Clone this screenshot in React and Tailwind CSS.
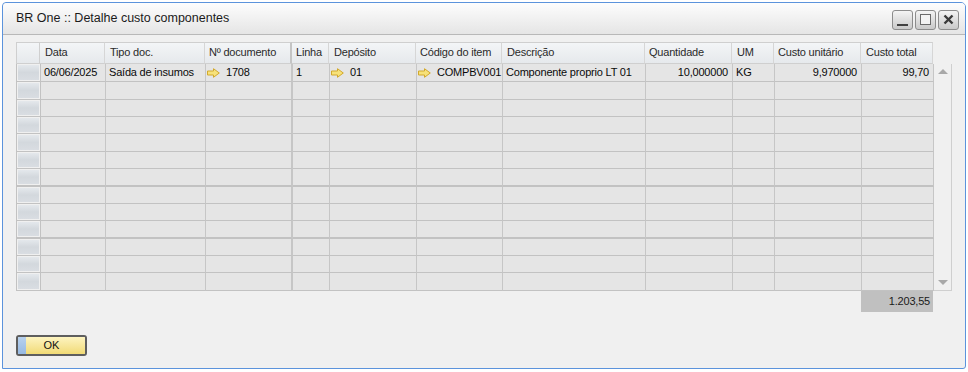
import React from 'react';

const cols = [
  { key: 'data', label: 'Data', w: 'w-[65px]', hp: 'pl-[5px]' },
  { key: 'tipo', label: 'Tipo doc.', w: 'w-[100px]', hp: 'pl-[5px]' },
  { key: 'doc', label: 'Nº documento', w: 'w-[87px]', hp: 'pl-[4px]', thick: true },
  { key: 'linha', label: 'Linha', w: 'w-[37px]', hp: 'pl-[4px]' },
  { key: 'dep', label: 'Depósito', w: 'w-[87px]', hp: 'pl-[5px]' },
  { key: 'cod', label: 'Código do item', w: 'w-[86px]', hp: 'pl-[4px]' },
  { key: 'desc', label: 'Descrição', w: 'w-[143px]', hp: 'pl-[5px]' },
  { key: 'qtd', label: 'Quantidade', w: 'w-[87px]', hp: 'pl-[4px]' },
  { key: 'um', label: 'UM', w: 'w-[42px]', hp: 'pl-[5px]' },
  { key: 'cu', label: 'Custo unitário', w: 'w-[87px]', hp: 'pl-[4px]' },
  { key: 'ct', label: 'Custo total', w: 'w-[72px]', hp: 'pl-[5px]' },
];

const row1 = {
  data: '06/06/2025',
  tipo: 'Saída de insumos',
  doc: '1708',
  linha: '1',
  dep: '01',
  cod: 'COMPBV001',
  desc: 'Componente proprio LT 01',
  qtd: '10,000000',
  um: 'KG',
  cu: '9,970000',
  ct: '99,70',
};

const linked = ['doc', 'dep', 'cod'];
const rightAligned = ['qtd', 'cu', 'ct'];

// bottom edges of the grid rows don't fall on an even step, so spell them out
const rowHeights = [
  'h-[18px]', 'h-[18px]', 'h-[17px]', 'h-[17px]', 'h-[18px]', 'h-[17px]', 'h-[18px]',
  'h-[17px]', 'h-[17px]', 'h-[18px]', 'h-[17px]', 'h-[17px]', 'h-[18px]',
];
const thickRows = [6, 9];

const LinkArrow = () => (
  <svg width="13" height="10" viewBox="0 0 13 10" className="shrink-0">
    <path
      d="M0.5 3 H6.5 V0.7 L12.3 5 L6.5 9.3 V7 H0.5 Z"
      fill="#f7e27a"
      stroke="#d2a92c"
      strokeWidth="1"
      strokeLinejoin="round"
    />
  </svg>
);

const TitleButton = ({ children }) => (
  <div className="w-[21px] h-[20px] rounded-[3px] border border-[#8c8c8c] bg-gradient-to-b from-[#f4f4f4] to-[#c9c9c9] flex items-center justify-center">
    {children}
  </div>
);

const RowHeader = ({ h, thick }) => (
  <div className={`w-[24px] ${h} shrink-0 border-r border-[#c2c2c2] ${thick ? 'border-b-2' : 'border-b'} border-b-[#c2c2c2] p-[1px]`}>
    <div className="w-full h-full bg-gradient-to-b from-[#e4e8ec] via-[#d3d8dd] to-[#d9dde2]" />
  </div>
);

const App = () => {
  return (
    <div className="w-[968px] h-[372px] bg-white overflow-hidden pt-[2px] pl-[2px] font-['Liberation_Sans',Arial,sans-serif]">
      <div className="w-[964px] h-[367px] border border-[#5b93dc] rounded-tl-[4px] rounded-tr-[5px] rounded-br-[3px] bg-[#f0f0f0] flex flex-col">
        {/* title bar */}
        <div className="h-[32px] shrink-0 border-b border-[#b8b8b8] bg-gradient-to-b from-[#fdfdfd] to-[#e5e5e5] flex items-center justify-between pl-[13px] pr-[6px] rounded-t-[4px]">
          <span className="text-[12.5px] text-[#1b1b1b]">BR One :: Detalhe custo componentes</span>
          <div className="flex gap-[2px] mt-[2px]">
            <TitleButton>
              <div className="w-[11px] h-[2px] bg-[#404040] mt-[11px]" />
            </TitleButton>
            <TitleButton>
              <div className="w-[11px] h-[11px] border border-[#6a6a6a] bg-[#f2f2f2]" />
            </TitleButton>
            <TitleButton>
              <svg width="11" height="11" viewBox="0 0 11 11">
                <path d="M1.5 1.5 L9.5 9.5 M9.5 1.5 L1.5 9.5" stroke="#3a3a3a" strokeWidth="2.4" />
              </svg>
            </TitleButton>
          </div>
        </div>

        {/* body */}
        <div className="pl-[13px] pt-[7px] flex flex-col">
          {/* header row */}
          <div className="flex h-[22px] text-[11px] text-[#2a2a2a] tracking-[-0.2px]">
            <div className="w-[24px] shrink-0 border-l border-t border-r border-b border-[#cfcfcf] bg-gradient-to-b from-[#f3f5f7] to-[#e6e9ec]" />
            {cols.map((c) => (
              <div
                key={c.key}
                className={`${c.w} shrink-0 ${c.hp} border-t border-b border-[#cfcfcf] ${c.thick ? 'border-r-2 border-r-[#c4c4c4]' : 'border-r border-r-[#d6d6d6]'} bg-gradient-to-b from-[#f3f5f7] to-[#e6e9ec] flex items-center pb-[2px] whitespace-nowrap overflow-hidden`}
              >
                {c.label}
              </div>
            ))}
          </div>

          {/* rows + scrollbar */}
          <div className="flex">
            <div className="flex flex-col border-l border-[#c2c2c2]">
              {rowHeights.map((h, i) => {
                const thick = thickRows.includes(i);
                return (
                  <div key={i} className="flex text-[11px] text-[#0a0a0a] tracking-[-0.2px]">
                    <RowHeader h={h} thick={thick} />
                    {cols.map((c) => {
                      const val = i === 0 ? row1[c.key] : '';
                      const right = rightAligned.includes(c.key);
                      const isLink = linked.includes(c.key);
                      return (
                        <div
                          key={c.key}
                          className={`${c.w} ${h} shrink-0 bg-[#e5e5e5] ${thick ? 'border-b-2' : 'border-b'} border-b-[#c2c2c2] ${c.thick ? 'border-r-2' : 'border-r'} border-r-[#c6c6c6] flex items-center whitespace-nowrap overflow-hidden ${right ? 'justify-end pr-[4px]' : isLink ? 'pl-[1px]' : 'pl-[3px]'}`}
                        >
                          {val && isLink ? (
                            <span className="flex items-center gap-[6px]">
                              <LinkArrow />
                              <span>{val}</span>
                            </span>
                          ) : (
                            val
                          )}
                        </div>
                      );
                    })}
                  </div>
                );
              })}
            </div>

            {/* vertical scrollbar */}
            <div className="w-[18px] h-[227px] border-r border-b border-[#cfcfcf] bg-[#f0f0f0] flex flex-col justify-between items-center py-[5px]">
              <div className="w-0 h-0 border-l-[5px] border-r-[5px] border-b-[5px] border-l-transparent border-r-transparent border-b-[#a8a8a8]" />
              <div className="w-0 h-0 border-l-[5px] border-r-[5px] border-t-[5px] border-l-transparent border-r-transparent border-t-[#a8a8a8]" />
            </div>
          </div>

          {/* total */}
          <div className="flex justify-start">
            <div className="w-[845px] shrink-0" />
            <div className="w-[72px] h-[21px] bg-[#c0c0c0] text-[11px] text-[#1a1a1a] tracking-[-0.2px] flex items-center justify-end pr-[3px] pb-[1px]">
              1.203,55
            </div>
          </div>

          {/* OK button */}
          <div className="mt-[23px]">
            <button className="w-[71px] h-[21px] rounded-[3px] border-2 border-[#5e5e5e] flex overflow-hidden p-0">
              <div className="w-[8px] h-full bg-gradient-to-b from-[#b8d2ee] to-[#97b9e2]" />
              <div className="flex-1 h-full bg-gradient-to-b from-[#fdf4c0] to-[#f1da74] flex items-center justify-center pr-[8px] text-[11px] text-[#111]">
                OK
              </div>
            </button>
          </div>
        </div>
      </div>
    </div>
  );
};

export default App;
